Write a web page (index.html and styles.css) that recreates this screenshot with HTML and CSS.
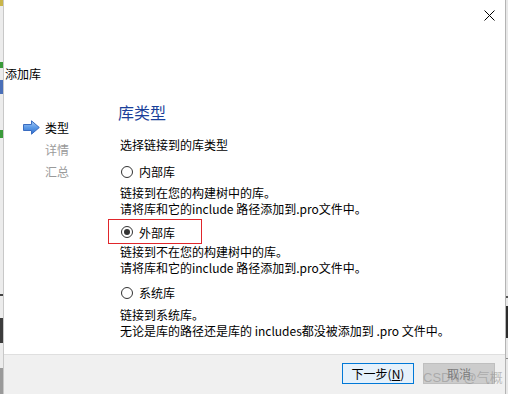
FILE: index.html
```html
<!DOCTYPE html>
<html lang="zh-CN">
<head>
<meta charset="utf-8">
<title>添加库</title>
<link rel="stylesheet" href="styles.css">
</head>
<body>
  <div class="bg-left">
    <i class="frag f1"></i>
    <i class="frag f2"></i>
    <i class="frag f3"></i>
    <i class="frag f4"></i>
    <i class="frag f5"></i>
    <i class="frag f6"></i>
    <i class="frag f7"></i>
    <i class="frag f8"></i>
    <i class="frag f9"></i>
    <i class="frag f10"></i>
  </div>
  <div class="dialog">
    <div class="titlebar">
      <span class="close" aria-label="关闭">
        <svg width="11" height="11" viewBox="0 0 11 11"><path d="M0.5 0.5 L10.5 10.5 M10.5 0.5 L0.5 10.5" stroke="#000" stroke-width="1" fill="none"/></svg>
      </span>
    </div>
    <div class="title">添加库</div>
    <div class="content">
      <nav class="steps">
        <div class="step active">
          <svg class="arrow" width="17" height="15" viewBox="0 0 17 15">
            <defs>
              <linearGradient id="ag" x1="0" y1="0" x2="0" y2="1">
                <stop offset="0" stop-color="#a9cdf7"/>
                <stop offset="0.5" stop-color="#5c9ae6"/>
                <stop offset="1" stop-color="#2f6fd0"/>
              </linearGradient>
            </defs>
            <path d="M0.5 4.5 H8.5 V0.8 L16.3 7.5 L8.5 14.2 V10.5 H0.5 Z" fill="url(#ag)" stroke="#3a6cc0" stroke-width="1" stroke-linejoin="round"/>
          </svg>
          <span>类型</span>
        </div>
        <div class="step"><span>详情</span></div>
        <div class="step"><span>汇总</span></div>
      </nav>
      <main class="page">
        <h1 class="heading">库类型</h1>
        <p class="sub">选择链接到的库类型</p>
        <label class="radio opt1"><span class="circle"></span><span>内部库</span></label>
        <p class="desc d1">链接到在您的构建树中的库。<br>请将库和它的include 路径添加到.pro文件中。</p>
        <div class="mark">
          <label class="radio"><span class="circle checked"></span><span>外部库</span></label>
        </div>
        <p class="desc d2">链接到不在您的构建树中的库。<br>请将库和它的include 路径添加到.pro文件中。</p>
        <label class="radio opt3"><span class="circle"></span><span>系统库</span></label>
        <p class="desc d3">链接到系统库。<br>无论是库的路径还是库的 includes都没被添加到 .pro 文件中。</p>
      </main>
    </div>
    <div class="footer">
      <button class="btn primary">下一步(<u>N</u>)</button>
      <button class="btn disabled">取消</button>
      <span class="watermark">CSDN @气概</span>
    </div>
  </div>
  <div class="bg-right">
    <i class="rfrag r1"></i>
    <i class="rfrag r2"></i>
    <i class="rfrag r3"></i>
  </div>
</body>
</html>
```

FILE: styles.css
```css
html, body {
  margin: 0;
  padding: 0;
}
body {
  width: 508px;
  height: 394px;
  overflow: hidden;
  display: flex;
  font-family: "Noto Sans CJK SC", "Noto Sans", sans-serif;
  font-size: 12px;
  color: #000;
  background: #fff;
}

/* background application fragments */
.bg-left {
  width: 3px;
  flex: none;
  background: #ececec;
  display: flex;
  flex-direction: column;
}
.frag { display: block; width: 3px; flex: none; }
.f1 { height: 6px; background: #c9b54a; }
.f2 { height: 56px; background: transparent; }
.f3 { height: 6px; background: #3a9a3a; }
.f4 { height: 12px; background: transparent; }
.f5 { height: 14px; background: #4a6fb8; }
.f6 { height: 36px; background: transparent; }
.f7 { height: 8px; background: #3a9a3a; }
.f8 { height: 156px; background: transparent; }
.f9 { height: 2px; background: #444; margin-bottom: 22px; }
.f10 { height: 25px; background: #3c3c3c; border-bottom: 25px solid #ececec; box-shadow: 0 26px 0 -0px #9a9a9a; }

.bg-right {
  width: 2px;
  flex: none;
  background: #e8e8e8;
  display: flex;
  flex-direction: column;
}
.rfrag { display: block; flex: none; width: 2px; }
.r1 { height: 2px; background: #555; margin-top: 296px; }
.r2 { height: 32px; background: #2d2d2d; margin-top: 8px; }
.r3 { height: 1px; background: #888; margin-top: 20px; }

.dialog {
  flex: 1;
  display: flex;
  flex-direction: column;
  background: #fff;
  border-left: 1px solid #c8c8c8;
  border-right: 1px solid #b4b4b4;
  min-width: 0;
}

.titlebar {
  height: 30px;
  flex: none;
  display: flex;
  justify-content: flex-end;
  align-items: flex-start;
  padding-right: 10px;
}
.close {
  margin-top: 10px;
  width: 11px;
  height: 11px;
  display: block;
}
.close svg { display: block; }

.title {
  margin-top: 35px;
  padding-left: 1px;
  line-height: 17px;
  height: 17px;
}

.content {
  flex: 1;
  display: flex;
}

.steps {
  width: 116px;
  flex: none;
  padding-top: 37px;
  padding-left: 19px;
  box-sizing: border-box;
  display: flex;
  flex-direction: column;
  gap: 5px;
}
.step {
  display: flex;
  align-items: center;
  height: 17px;
  line-height: 17px;
  padding-left: 22px;
  color: #9a9a9a;
}
.step.active {
  padding-left: 0;
  color: #000;
  gap: 5px;
}
.arrow { display: block; flex: none; }

.page {
  flex: 1;
  padding-top: 19px;
  display: flex;
  flex-direction: column;
  align-items: flex-start;
}
.heading {
  margin: 0 0 0 -2px;
  font-size: 16px;
  font-weight: normal;
  line-height: 22px;
  color: #1a3f9a;
}
.sub {
  margin: 13px 0 0;
  line-height: 17px;
}
.radio {
  display: flex;
  align-items: center;
  height: 17px;
  line-height: 17px;
  gap: 6px;
}
.circle {
  width: 12px;
  height: 12px;
  box-sizing: border-box;
  border: 1px solid #333;
  border-radius: 50%;
  margin-left: 1px;
  display: flex;
  align-items: center;
  justify-content: center;
  background: #fff;
}
.circle.checked::after {
  content: "";
  width: 6px;
  height: 6px;
  border-radius: 50%;
  background: #333;
}
.opt1 { margin-top: 10px; }
.desc {
  margin: 0;
  line-height: 16px;
}
.d1 { margin-top: 5px; }
.mark {
  margin-top: 2px;
  margin-left: -12px;
  width: 81px;
  height: 23px;
  border: 1px solid #e0262b;
  padding-left: 11px;
  display: flex;
  align-items: center;
}
.mark .radio { margin-top: 1px; }
.d2 { margin-top: 0; }
.opt3 { margin-top: 8px; }
.d3 { margin-top: 6px; }

.footer {
  height: 40px;
  flex: none;
  box-sizing: border-box;
  background: #f0f0f0;
  border-top: 1px solid #dfdfdf;
  padding: 8px 10px 0 0;
  display: flex;
  justify-content: flex-end;
  align-items: flex-start;
  gap: 9px;
  position: relative;
}
.btn {
  width: 72px;
  height: 21px;
  box-sizing: border-box;
  font-family: "Noto Sans CJK SC", "Noto Sans", sans-serif;
  font-size: 12px;
  line-height: 17px;
  padding: 0;
  margin: 0;
  border-radius: 0;
}
.btn.primary {
  background: #e5f1fb;
  border: 1px solid #0078d7;
  color: #000;
}
.btn.disabled {
  background: #cccccc;
  border: 1px solid #bfbfbf;
  color: #7a7a7a;
}
.watermark {
  position: absolute;
  left: 419px;
  top: 15px;
  font-family: "Liberation Sans", "Noto Sans CJK SC", sans-serif;
  font-size: 13px;
  line-height: 15px;
  color: rgba(140, 140, 140, 0.55);
  white-space: nowrap;
  pointer-events: none;
}
```
